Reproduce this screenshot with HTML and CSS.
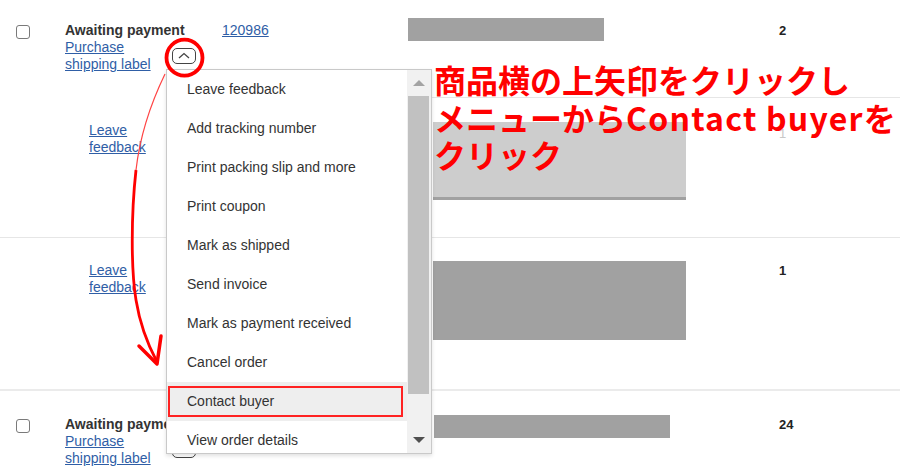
FILE: index.html
```html
<!DOCTYPE html>
<html lang="ja">
<head>
    <meta charset="UTF-8">
    <meta name="viewport" content="width=device-width, initial-scale=1.0">
    <title>Orders - Contact buyer</title>
    <link rel="stylesheet" href="styles.css">
</head>
<body>
<div class="page">

    <div class="order order-first">
        <div class="line main">
            <div class="cell check"><span class="checkbox"></span></div>
            <div class="cell status">
                <div class="status-text">
                    <div class="status-title">Awaiting payment</div>
                    <a href="#" class="link ship">Purchase shipping label</a>
                </div>
                <span class="toggle">
                    <svg width="24" height="16" viewBox="0 0 24 16"><polyline points="7,10 12,5.5 17,10" fill="none" stroke="#444" stroke-width="1.3"/></svg>
                </span>
            </div>
            <div class="cell order-no"><a href="#" class="link">120986</a></div>
            <div class="cell item"><div class="redact bar"></div></div>
            <div class="cell qty">2</div>
        </div>
        <div class="line sub">
            <div class="cell feedback"><a href="#" class="link fb">Leave feedback</a></div>
            <div class="cell item pad"><div class="redact block light"></div></div>
            <div class="cell qty faint">1</div>
        </div>
    </div>

    <div class="order order-second">
        <div class="line sub plain">
            <div class="cell feedback"><a href="#" class="link fb">Leave feedback</a></div>
            <div class="cell item pad"><div class="redact block"></div></div>
            <div class="cell qty">1</div>
        </div>
    </div>

    <div class="order order-third">
        <div class="line main">
            <div class="cell check"><span class="checkbox"></span></div>
            <div class="cell status">
                <div class="status-text">
                    <div class="status-title">Awaiting payment</div>
                    <a href="#" class="link ship">Purchase shipping label</a>
                </div>
                <span class="toggle">
                    <svg width="24" height="16" viewBox="0 0 24 16"><polyline points="7,6 12,10.5 17,6" fill="none" stroke="#444" stroke-width="1.3"/></svg>
                </span>
            </div>
            <div class="cell order-no"></div>
            <div class="cell item pad"><div class="redact bar wide"></div></div>
            <div class="cell qty">24</div>
        </div>
    </div>

    <!-- actions dropdown -->
    <div class="menu">
        <ul class="menu-list">
            <li>Leave feedback</li>
            <li>Add tracking number</li>
            <li>Print packing slip and more</li>
            <li>Print coupon</li>
            <li>Mark as shipped</li>
            <li>Send invoice</li>
            <li>Mark as payment received</li>
            <li>Cancel order</li>
            <li class="active">Contact buyer</li>
            <li>View order details</li>
        </ul>
        <div class="scrollbar">
            <div class="sb-btn"><span class="tri-up"></span></div>
            <div class="sb-thumb"></div>
            <div class="sb-space"></div>
            <div class="sb-btn"><span class="tri-down"></span></div>
        </div>
    </div>

    <!-- annotation -->
    <svg class="mark-circle" width="50" height="50" viewBox="0 0 50 50">
        <circle cx="24.5" cy="24.7" r="18" fill="none" stroke="#f00" stroke-width="3.8"/>
    </svg>
    <svg class="mark-arrow" width="900" height="476" viewBox="0 0 900 476">
        <path d="M165 74 C150 105 140 135 136 170" fill="none" stroke="#f44" stroke-width="1.2"/>
        <path d="M136 170 C131 215 131 270 136 300 C140 325 148 345 157 362" fill="none" stroke="#f00" stroke-width="2.8"/>
        <path d="M139 346 L157 364 L161 336" fill="none" stroke="#f00" stroke-width="3.5" stroke-linejoin="round" stroke-linecap="round"/>
    </svg>
    <div class="note">商品横の上矢印をクリックし<br>メニューから<span class="latin">Contact buyer</span>を<br>クリック</div>

</div>
</body>
</html>
```

FILE: styles.css
```css
body {
    margin: 0;
    background-color: #fff;
    color: #333;
    font-family: "Liberation Sans", Arial, sans-serif;
    font-size: 14px;
    line-height: 17px;
}

.page {
    position: relative;
    width: 900px;
    height: 476px;
    overflow: hidden;
}

.link {
    color: #2f5ea6;
    text-decoration: underline;
}

/* order rows */
.order-first {
    border-bottom: 1px solid #e6e6e6;
}

.order-second {
    height: 153px;
    box-sizing: border-box;
    border-bottom: 2px solid #ebebeb;
}

.line {
    display: grid;
    grid-template-columns: 65px 157px 186px 371px 1fr;
    box-sizing: border-box;
}

.order-first .main {
    height: 97px;
    padding-top: 22px;
}

.order-third .main {
    padding-top: 25px;
}

.sub {
    height: 140px;
}

.sub .cell {
    border-top: 1px solid #e6e6e6;
    padding-top: 24px;
}

.sub .feedback {
    grid-column: 1 / 4;
    border-top-color: transparent;
    padding-left: 89px;
}

.sub.plain .cell {
    border-top-color: transparent;
    padding-top: 22px;
}

.sub.plain .feedback,
.sub.plain .qty {
    padding-top: 23px;
}

.fb {
    display: block;
    width: 66px;
}

.check {
    padding-left: 16px;
}

.checkbox {
    display: block;
    width: 14px;
    height: 14px;
    margin-top: 3px;
    box-sizing: border-box;
    border: 1.5px solid #7a7a7a;
    border-radius: 3px;
}

.status {
    display: flex;
    align-items: flex-start;
}

.status-text {
    width: 107px;
    flex-shrink: 0;
}

.status-title {
    font-weight: bold;
    white-space: nowrap;
}

.ship {
    display: block;
    width: 100px;
}

.toggle {
    display: block;
    width: 24px;
    height: 16px;
    margin-top: 26px;
    box-sizing: border-box;
    border: 1px solid #444;
    border-radius: 5px;
    position: relative;
}

.toggle svg {
    position: absolute;
    left: -1px;
    top: -1px;
}

.order-first .main .item {
    margin-top: -4px;
}

.item.pad {
    padding-left: 25px;
}

.order-third .item.pad {
    padding-left: 26px;
    margin-top: -1px;
}

.redact {
    background-color: #a1a1a1;
}

.bar {
    width: 196px;
    height: 23px;
}

.bar.wide {
    width: 236px;
}

.block {
    width: 253px;
    height: 79px;
}

.block.light {
    height: 75px;
    background-color: #cdcdcd;
    border-bottom: 3px solid #a1a1a1;
}

.qty {
    font-size: 13px;
    font-weight: bold;
    color: #222;
}

.qty.faint {
    color: #c8c8c8;
    font-weight: normal;
    padding-top: 27px;
}

/* dropdown menu */
.menu {
    position: absolute;
    left: 166px;
    top: 69px;
    width: 266px;
    height: 385px;
    box-sizing: border-box;
    border: 1px solid #c9c9c9;
    background-color: #fff;
    box-shadow: 0 2px 4px rgba(0, 0, 0, 0.12);
    display: flex;
    overflow: hidden;
}

.menu-list {
    flex: 1;
    list-style: none;
    margin: 0;
    padding: 0;
}

.menu-list li {
    position: relative;
    height: 39px;
    line-height: 38px;
    padding-left: 20px;
    color: #333;
    white-space: nowrap;
}

.menu-list li.active {
    background-color: #eeeeee;
}

.menu-list li.active::after {
    content: "";
    position: absolute;
    left: 1px;
    right: 4px;
    top: 4px;
    bottom: 4px;
    border: 2px solid #f22;
}

.scrollbar {
    width: 24px;
    background-color: #f1f1f1;
    display: flex;
    flex-direction: column;
}

.sb-btn {
    height: 26px;
    flex-shrink: 0;
    display: flex;
    align-items: center;
    justify-content: center;
}

.tri-up {
    width: 0;
    height: 0;
    border-left: 6px solid transparent;
    border-right: 6px solid transparent;
    border-bottom: 6px solid #a3a3a3;
}

.tri-down {
    width: 0;
    height: 0;
    border-left: 6px solid transparent;
    border-right: 6px solid transparent;
    border-top: 6px solid #505050;
}

.sb-thumb {
    height: 298px;
    margin-left: 1px;
    width: 21px;
    background-color: #c1c1c1;
}

.sb-space {
    flex: 1;
}

/* red annotation */
.mark-circle {
    position: absolute;
    left: 160px;
    top: 33px;
}

.mark-arrow {
    position: absolute;
    left: 0;
    top: 0;
    pointer-events: none;
}

.note {
    position: absolute;
    left: 434px;
    top: 61px;
    color: #ff0000;
    font-family: "Noto Sans CJK JP", sans-serif;
    font-size: 32px;
    font-weight: bold;
    line-height: 37.5px;
    white-space: nowrap;
}

.note .latin {
    letter-spacing: 1.2px;
}
```
